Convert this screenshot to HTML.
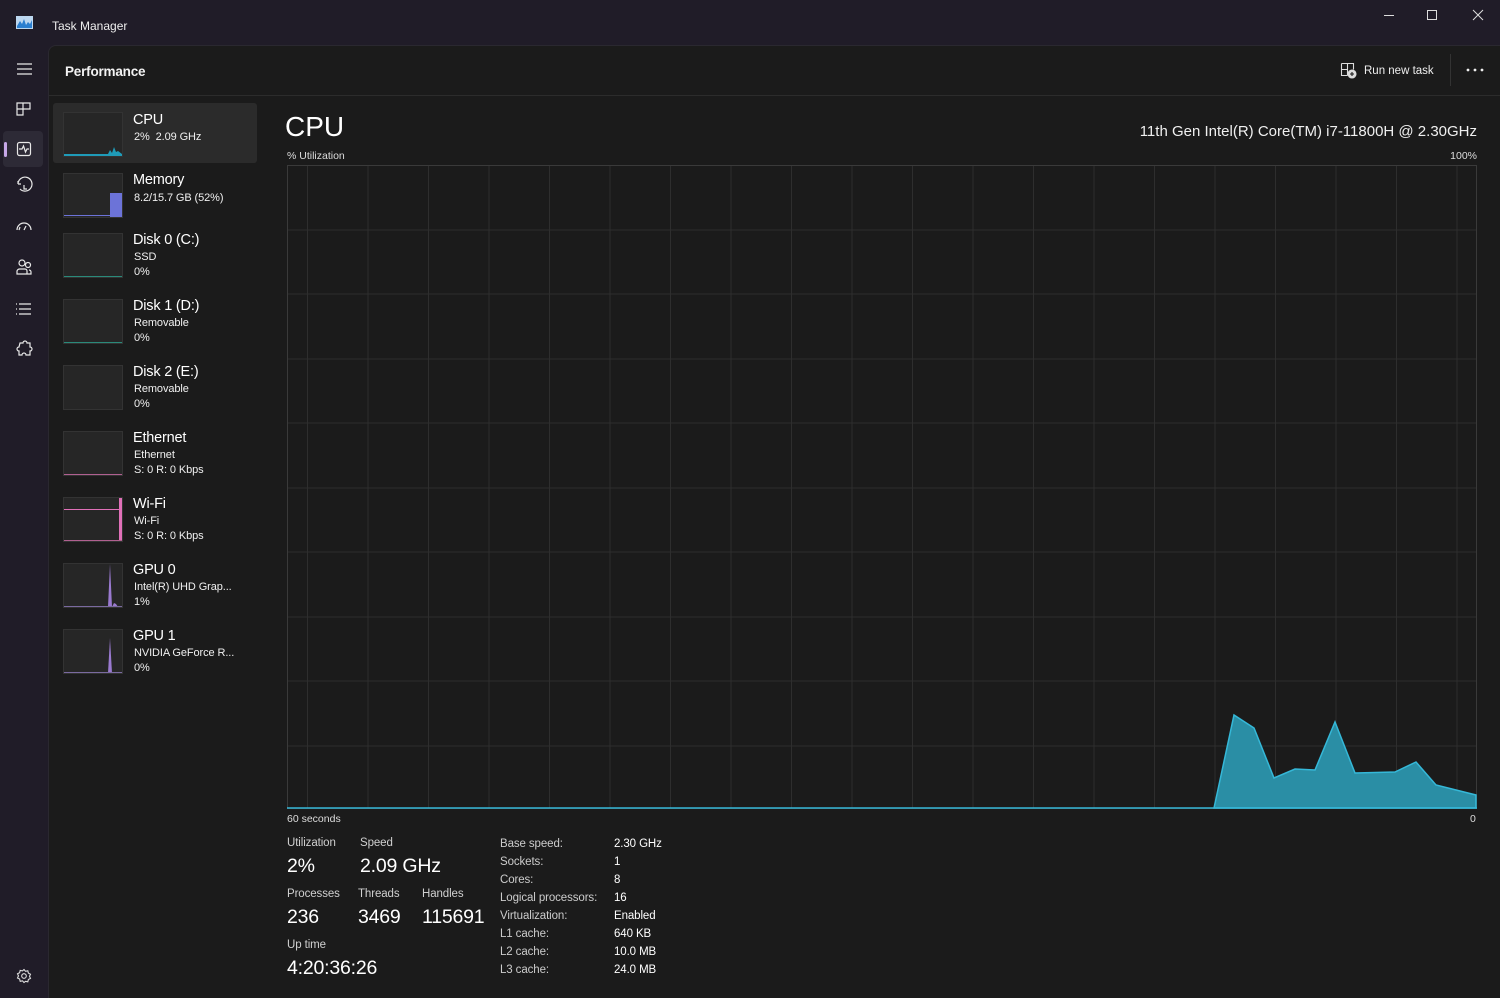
<!DOCTYPE html>
<html><head><meta charset="utf-8"><style>
*{margin:0;padding:0;box-sizing:border-box}
body{width:1500px;height:998px;background:#201c28;font-family:"Liberation Sans",sans-serif;color:#fff;position:relative;overflow:hidden}
.abs{position:absolute}
.main{position:absolute;left:48px;top:45px;right:0;bottom:0;background:#1b1b1b;border-top-left-radius:8px;border-left:1px solid #2a2830;border-top:1px solid #2a2830}
.t{position:absolute;white-space:nowrap}
.item{position:absolute;left:53px;width:204px;height:60px}
.thumb{position:absolute;left:10px;width:60px;height:45px;background:#262626;border:1px solid #333}
.nm{position:absolute;left:80px;font-size:14.5px;color:#fff;letter-spacing:-0.2px;margin-top:1px}
.sb{position:absolute;left:81px;font-size:11px;color:#f0f0f0;letter-spacing:-0.1px;margin-top:1px}
.lbl{font-size:11.5px;color:#d0d0d0;letter-spacing:-0.1px;margin-top:1px}
.big{font-size:19.5px;color:#fff;letter-spacing:-0.2px}
</style></head><body>
<svg class="abs" style="left:16px;top:16px" width="17" height="13" viewBox="0 0 17 13"><rect width="17" height="13" fill="#bcd7f0"/><path d="M1 10 L4 5 L6 8 L8 3 L10 9 L12 6 L14 8 L16 4 L16 12 L1 12Z" fill="#2b7fd0"/></svg>
<div class="t" style="left:52px;top:19px;font-size:12px;color:#eee">Task Manager</div>
<svg class="abs" style="left:1380px;top:8px" width="110" height="16"><line x1="4" y1="7.5" x2="14" y2="7.5" stroke="#ddd"/><rect x="47.5" y="2.5" width="9" height="9" fill="none" stroke="#ddd"/><path d="M93 2 L103 12 M103 2 L93 12" stroke="#ddd"/></svg>
<svg class="abs" style="left:0;top:55px" width="48" height="310" fill="none" stroke="#e8e8e8" stroke-width="1.2">
<path d="M17 9h15M17 14h15M17 19h15"/>
<path d="M17 48h6v6h-6zM23 48h7v6h-7zM17 54h6v6h-6z"/>
<rect x="3" y="76" width="40" height="36" rx="4" fill="#2d2a36" stroke="none"/>
<rect x="4" y="87" width="3" height="15" rx="1.5" fill="#c7a8e8" stroke="none"/>
<rect x="17.5" y="87.5" width="13" height="13" rx="2"/><path d="M19 94h3l1.5-3 2 6 1.5-3h2"/>
<path d="M18 129a7 7 0 1 1 2 5M18 129v-3M18 129h3M24 130v4h3"/>
<path d="M17 175a7 7 0 0 1 14 0M24 175l2-4M20 172l-1 3"/>
<circle cx="22" cy="208" r="3"/><circle cx="28" cy="210" r="2.5"/><path d="M17 219v-3a3 3 0 0 1 3-2h5a2 2 0 0 1 2 2v3zM27 219h4v-2a2 2 0 0 0-2-2"/>
<path d="M19 249h12M19 254h12M19 259h12M16 249h1M16 254h1M16 259h1"/>
<path d="M20 288h3a2 2 0 0 1 4 0h3v4a2 2 0 0 1 0 4v4h-4a2 2 0 0 0-4 0h-3v-4a2 2 0 0 1 0-4z"/>
</svg>
<svg class="abs" style="left:16px;top:968px" width="16" height="16" fill="none" stroke="#ddd" stroke-width="1.1"><circle cx="8" cy="8" r="2.3"/><path d="M8 1.5l1.5 1.8 2.3-.5.6 2.3 2.1 1.1-1 2.1 1 2.1-2.1 1.1-.6 2.3-2.3-.5L8 14.5l-1.5-1.7-2.3.5-.6-2.3L1.5 10l1-2.1-1-2.1 2.1-1.1.6-2.3 2.3.5z"/></svg>
<div class="main"></div>
<div class="t" style="left:65px;top:64px;font-size:13.5px;font-weight:bold;color:#f2f2f2;letter-spacing:-0.2px">Performance</div>
<div class="abs" style="left:49px;top:95px;right:0;height:1px;background:#2c2c2c"></div>
<svg class="abs" style="left:1340px;top:62px" width="18" height="17" fill="none" stroke="#ddd" stroke-width="1.1"><path d="M1.5 1.5h12v6M1.5 1.5v12h6M1.5 7.5h6v6M7.5 1.5v6"/><circle cx="12" cy="12" r="4" fill="#ddd"/><path d="M12 10v4M10 12h4" stroke="#1b1b1b"/></svg>
<div class="t" style="left:1364px;top:65px;font-size:11.5px;color:#eee">Run new task</div>
<div class="abs" style="left:1450px;top:54px;width:1px;height:32px;background:#333"></div>
<svg class="abs" style="left:1466px;top:68px" width="18" height="4"><circle cx="2" cy="2" r="1.4" fill="#eee"/><circle cx="9" cy="2" r="1.4" fill="#eee"/><circle cx="16" cy="2" r="1.4" fill="#eee"/></svg>
<div class="item" style="top:103px;background:#2b2b2b;border-radius:3px"></div>
<div class="item" style="top:103px"><div class="thumb" style="top:9px"><svg width="58" height="43" style="position:absolute;left:0;top:0"><path d="M0 41 L44 41 L46 37 L48 40 L50 34 L52 39 L54 38 L58 41 L58 43 L0 43Z" fill="#1f9bb8"/><line x1="0" y1="41.5" x2="58" y2="41.5" stroke="#1f9bb8"/></svg></div><div class="nm" style="top:8px">CPU</div><div class="sb" style="top:27px">2%&nbsp; 2.09 GHz</div></div>
<div class="item" style="top:163px"><div class="thumb" style="top:10px"><div style="position:absolute;left:46px;top:19px;width:12px;height:24px;background:#6c73d8"></div><div style="position:absolute;left:0;top:41px;width:58px;height:1px;background:#6c73d8"></div></div><div class="nm" style="top:8px">Memory</div><div class="sb" style="top:28px">8.2/15.7 GB (52%)</div></div>
<div class="item" style="top:229px"><div class="thumb" style="top:4px"><div style="position:absolute;left:0;top:42px;width:58px;height:1px;background:#2a8a7a"></div></div><div class="nm" style="top:2px">Disk 0 (C:)</div><div class="sb" style="top:21px">SSD</div><div class="sb" style="top:36px">0%</div></div>
<div class="item" style="top:295px"><div class="thumb" style="top:4px"><div style="position:absolute;left:0;top:42px;width:58px;height:1px;background:#2a8a7a"></div></div><div class="nm" style="top:2px">Disk 1 (D:)</div><div class="sb" style="top:21px">Removable</div><div class="sb" style="top:36px">0%</div></div>
<div class="item" style="top:361px"><div class="thumb" style="top:4px"></div><div class="nm" style="top:2px">Disk 2 (E:)</div><div class="sb" style="top:21px">Removable</div><div class="sb" style="top:36px">0%</div></div>
<div class="item" style="top:427px"><div class="thumb" style="top:4px"><div style="position:absolute;left:0;top:42px;width:58px;height:1px;background:#b06090"></div></div><div class="nm" style="top:2px">Ethernet</div><div class="sb" style="top:21px">Ethernet</div><div class="sb" style="top:36px">S: 0 R: 0 Kbps</div></div>
<div class="item" style="top:493px"><div class="thumb" style="top:4px"><div style="position:absolute;left:0;top:11px;width:55px;height:1px;background:#e070b8"></div><div style="position:absolute;left:55px;top:0;width:3px;height:43px;background:#e070b8"></div><div style="position:absolute;left:0;top:42px;width:58px;height:1px;background:#b06090"></div></div><div class="nm" style="top:2px">Wi-Fi</div><div class="sb" style="top:21px">Wi-Fi</div><div class="sb" style="top:36px">S: 0 R: 0 Kbps</div></div>
<div class="item" style="top:559px"><div class="thumb" style="top:4px"><svg width="58" height="43" style="position:absolute"><path d="M44 43 L46 0 L48 43Z M48 43 L50 39 L52 40 L54 43Z" fill="#9a7ad0"/><line x1="0" y1="42.5" x2="58" y2="42.5" stroke="#7a6aa0"/></svg></div><div class="nm" style="top:2px">GPU 0</div><div class="sb" style="top:21px">Intel(R) UHD Grap...</div><div class="sb" style="top:36px">1%</div></div>
<div class="item" style="top:625px"><div class="thumb" style="top:4px"><svg width="58" height="43" style="position:absolute"><path d="M44 43 L46 8 L48 43Z" fill="#9a7ad0"/><line x1="0" y1="42.5" x2="58" y2="42.5" stroke="#7a6aa0"/></svg></div><div class="nm" style="top:2px">GPU 1</div><div class="sb" style="top:21px">NVIDIA GeForce R...</div><div class="sb" style="top:36px">0%</div></div>
<div class="t" style="left:285px;top:111px;font-size:28px;color:#fff">CPU</div>
<div class="t" style="right:23px;top:123px;font-size:15px;color:#f0f0f0">11th Gen Intel(R) Core(TM) i7-11800H @ 2.30GHz</div>
<div class="t" style="left:287px;top:150px;font-size:10.5px;color:#ddd">% Utilization</div>
<div class="t" style="right:23px;top:150px;font-size:10.5px;color:#ddd">100%</div>
<svg class="abs" style="left:287px;top:165px" width="1190" height="645">
<g stroke="#2e2e2e" stroke-width="1">
<line x1="20.5" y1="0" x2="20.5" y2="644"/><line x1="81" y1="0" x2="81" y2="644"/><line x1="141.5" y1="0" x2="141.5" y2="644"/><line x1="202" y1="0" x2="202" y2="644"/><line x1="262.5" y1="0" x2="262.5" y2="644"/><line x1="323" y1="0" x2="323" y2="644"/><line x1="383.5" y1="0" x2="383.5" y2="644"/><line x1="444" y1="0" x2="444" y2="644"/><line x1="504.5" y1="0" x2="504.5" y2="644"/><line x1="565" y1="0" x2="565" y2="644"/><line x1="625.5" y1="0" x2="625.5" y2="644"/><line x1="686" y1="0" x2="686" y2="644"/><line x1="746.5" y1="0" x2="746.5" y2="644"/><line x1="807" y1="0" x2="807" y2="644"/><line x1="867.5" y1="0" x2="867.5" y2="644"/><line x1="928" y1="0" x2="928" y2="644"/><line x1="988.5" y1="0" x2="988.5" y2="644"/><line x1="1049" y1="0" x2="1049" y2="644"/><line x1="1109.5" y1="0" x2="1109.5" y2="644"/><line x1="1170" y1="0" x2="1170" y2="644"/>
<line x1="0" y1="65" x2="1190" y2="65"/><line x1="0" y1="129" x2="1190" y2="129"/><line x1="0" y1="194" x2="1190" y2="194"/><line x1="0" y1="258" x2="1190" y2="258"/><line x1="0" y1="323" x2="1190" y2="323"/><line x1="0" y1="387" x2="1190" y2="387"/><line x1="0" y1="452" x2="1190" y2="452"/><line x1="0" y1="516" x2="1190" y2="516"/><line x1="0" y1="581" x2="1190" y2="581"/>
</g>
<rect x="0.5" y="0.5" width="1189" height="643" fill="none" stroke="#3a3a3a"/>
<path d="M927 643 L947 550 L967 563 L987 613 L1008 604 L1028 605 L1048 557 L1068 608 L1108 607 L1129 597 L1149 620 L1189 630 L1189 643Z" fill="#2a8ea5" stroke="#35b8d8" stroke-width="1.5"/>
<line x1="0" y1="643" x2="1190" y2="643" stroke="#35b8d8" stroke-width="1.5"/>
</svg>
<div class="t" style="left:287px;top:813px;font-size:10.5px;color:#ddd">60 seconds</div>
<div class="t" style="left:1470px;top:813px;font-size:10.5px;color:#ddd">0</div>
<div class="t lbl" style="left:287px;top:836px">Utilization</div><div class="t lbl" style="left:360px;top:836px">Speed</div>
<div class="t big" style="left:287px;top:855px">2%</div><div class="t big" style="left:360px;top:855px">2.09 GHz</div>
<div class="t lbl" style="left:287px;top:887px">Processes</div><div class="t lbl" style="left:358px;top:887px">Threads</div><div class="t lbl" style="left:422px;top:887px">Handles</div>
<div class="t big" style="left:287px;top:906px">236</div><div class="t big" style="left:358px;top:906px">3469</div><div class="t big" style="left:422px;top:906px">115691</div>
<div class="t lbl" style="left:287px;top:938px">Up time</div>
<div class="t big" style="left:287px;top:957px">4:20:36:26</div>
<div class="t" style="left:500px;top:835px;font-size:11.5px;color:#ccc;line-height:18px;letter-spacing:-0.1px">Base speed:<br>Sockets:<br>Cores:<br>Logical processors:<br>Virtualization:<br>L1 cache:<br>L2 cache:<br>L3 cache:</div>
<div class="t" style="left:614px;top:835px;font-size:11.5px;color:#fff;line-height:18px;letter-spacing:-0.1px">2.30 GHz<br>1<br>8<br>16<br>Enabled<br>640 KB<br>10.0 MB<br>24.0 MB</div>
</body></html>
